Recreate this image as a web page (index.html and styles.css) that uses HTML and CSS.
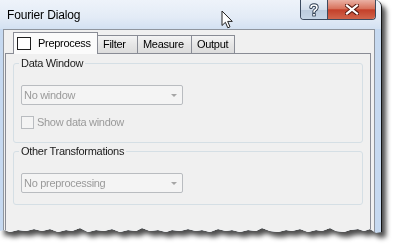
FILE: index.html
```html
<!DOCTYPE html>
<html lang="en">
<head>
    <meta charset="UTF-8">
    <title>Fourier Dialog</title>
    <link rel="stylesheet" href="styles.css">
</head>
<body>

<div class="page">
  <div class="shot">
    <div class="window">

      <!-- Title bar -->
      <div class="titlebar">
        <span class="title">Fourier Dialog</span>
        <div class="caption-btns">
          <div class="cap-help">
            <svg width="12" height="14" viewBox="0 0 12 14">
              <path d="M3 4.5 Q3 2 6 2 Q9 2 9 4.5 Q9 6 7.2 7 Q6 7.6 6 9" fill="none" stroke="#2b3a4e" stroke-width="3.4" stroke-linecap="round"/>
              <path d="M3 4.5 Q3 2 6 2 Q9 2 9 4.5 Q9 6 7.2 7 Q6 7.6 6 9" fill="none" stroke="#fff" stroke-width="1.6" stroke-linecap="round"/>
              <rect x="4.3" y="10.2" width="3.4" height="3.2" fill="#2b3a4e"/>
              <rect x="5.1" y="11" width="1.8" height="1.6" fill="#fff"/>
            </svg>
          </div>
          <div class="cap-close">
            <svg width="14" height="11" viewBox="0 0 14 11">
              <path d="M2 1.5 L12 9.5 M12 1.5 L2 9.5" stroke="#5a1a10" stroke-width="4.2" stroke-linecap="square"/>
              <path d="M2 1.5 L12 9.5 M12 1.5 L2 9.5" stroke="#fff" stroke-width="2.2" stroke-linecap="square"/>
            </svg>
          </div>
        </div>
      </div>

      <!-- Client area -->
      <div class="frame">
        <div class="client">
          <div class="tabs">
            <div class="tab selected">
              <span class="tab-check"></span>
              <span>Preprocess</span>
            </div>
            <div class="tab tab-filter">Filter</div>
            <div class="tab tab-measure">Measure</div>
            <div class="tab tab-output">Output</div>
          </div>

          <div class="panel">
            <div class="group group-window">
              <span class="group-title">Data Window</span>
              <div class="combo">
                <span>No window</span>
                <span class="combo-arrow"></span>
              </div>
              <label class="check-row">
                <span class="check"></span>
                <span>Show data window</span>
              </label>
            </div>

            <div class="group group-other">
              <span class="group-title">Other Transformations</span>
              <div class="combo">
                <span>No preprocessing</span>
                <span class="combo-arrow"></span>
              </div>
            </div>
          </div>
        </div>
      </div>

    </div>
  </div>
</div>

<!-- Mouse pointer -->
<svg class="cursor" width="14" height="20" viewBox="0 0 14 20">
  <path d="M1 1 L1 15.5 L4.4 12.3 L6.8 17.8 L9 16.8 L6.7 11.4 L11.3 11.4 Z" fill="#fff" stroke="#222" stroke-width="1" stroke-linejoin="round"/>
</svg>

</body>
</html>
```

FILE: styles.css
```css
html, body {
  margin: 0;
  padding: 0;
  background: #ffffff;
  width: 398px;
  height: 252px;
  overflow: hidden;
  font-family: "Liberation Sans", Arial, sans-serif;
  font-size: 11px;
  letter-spacing: -0.3px;
  color: #1b1b1b;
}

/* shadow under the torn screenshot */
.page {
  width: 382px;
  filter: drop-shadow(4px 5px 2.5px rgba(0, 0, 0, 0.7));
}

.shot {
  width: 382px;
  height: 240px;
  clip-path: polygon(0 0, 382px 0, 382px 232px, 376px 233px, 370px 229px, 364px 231px, 358px 229px,
    350px 230px, 344px 232px, 336px 231px, 330px 228px, 322px 231px, 316px 230px, 308px 232px,
    300px 229px, 292px 231px, 286px 230px, 278px 232px, 270px 231px, 262px 228px, 256px 231px,
    248px 230px, 240px 232px, 232px 230px, 226px 231px, 218px 229px, 210px 232px, 202px 230px,
    196px 231px, 188px 229px, 180px 231px, 172px 230px, 166px 232px, 158px 230px, 150px 231px,
    142px 228px, 136px 231px, 128px 230px, 120px 232px, 112px 229px, 104px 231px, 96px 230px,
    88px 232px, 80px 228px, 72px 231px, 66px 230px, 58px 232px, 50px 229px, 42px 231px,
    34px 229px, 26px 231px, 18px 230px, 10px 232px, 4px 230px, 0 231px);
}

.window {
  width: 381px;
  height: 240px;
  border-right: 1px solid #111;
  border-top-right-radius: 7px;
  background: #c6d9f0;
  display: flex;
  flex-direction: column;
}

/* Title bar */
.titlebar {
  height: 29px;
  flex: none;
  display: flex;
  align-items: flex-start;
  background: linear-gradient(to bottom, #eef3fa, #e3ebf6 60%, #d3e1f2);
  border-top-right-radius: 7px;
}

.title {
  margin: 8px 0 0 7px;
  font-size: 12px;
  line-height: 15px;
  letter-spacing: -0.15px;
  color: #000;
}

.caption-btns {
  margin-left: auto;
  margin-right: 5px;
  display: flex;
  height: 19px;
  border: 1px solid #3d4b5f;
  border-top: none;
  border-radius: 0 0 4px 4px;
  overflow: hidden;
}

.cap-help {
  width: 26px;
  display: flex;
  justify-content: center;
  align-items: center;
  border-right: 1px solid #3d4b5f;
  background: linear-gradient(to bottom, #e9eff6, #d3deeb 50%, #bccbdd 52%, #c6d5e6);
}

.cap-close {
  width: 47px;
  display: flex;
  justify-content: center;
  align-items: center;
  background: linear-gradient(to bottom, #eab1a4, #d8735d 45%, #c4402a 52%, #d1654c);
}

/* Frame + client */
.frame {
  flex: 1;
  padding: 0 6px 0 3px;
  display: flex;
}

.client {
  flex: 1;
  background: #f0f0f0;
  border: 1px solid #8f959e;
  border-bottom: none;
  padding-top: 2px;
  display: flex;
  flex-direction: column;
}

/* Tabs */
.tabs {
  height: 21px;
  display: flex;
  align-items: flex-end;
  padding-left: 9px;
  position: relative;
  z-index: 2;
}

.tab {
  height: 17px;
  line-height: 17px;
  border: 1px solid #898c95;
  border-bottom: none;
  background: linear-gradient(to bottom, #f4f4f4, #e6e6e6 50%, #dcdcdc);
  padding-left: 5px;
  margin-left: -1px;
  color: #000;
}

.tab.selected {
  height: 21px;
  width: 80px;
  margin-left: 0;
  margin-bottom: -1px;
  background: #fbfbfb;
  display: flex;
  align-items: center;
  gap: 7px;
  padding-left: 3px;
  position: relative;
  z-index: 1;
}

.tab-check {
  width: 12px;
  height: 11px;
  border: 1px solid #1e1e1e;
  background: #fff;
}

.tab-filter { width: 34px; }
.tab-measure { width: 48px; }
.tab-output { width: 37px; }

/* Tab page */
.panel {
  flex: 1;
  margin: 0 3px 0 1px;
  border: 1px solid #898c95;
  border-bottom: none;
  background: #f0f0f0;
  padding: 9px 7px 0;
}

.group {
  border: 1px solid #d5dfe5;
  border-radius: 3px;
  padding: 0 7px;
  display: flex;
  flex-direction: column;
  align-items: flex-start;
}

.group-window { padding-bottom: 13px; }
.group-other { margin-top: 8px; padding-bottom: 11px; }

.group-title {
  margin: -7px 0 0 -2px;
  padding: 0 2px;
  line-height: 13px;
  background: #f0f0f0;
  color: #1b1b1b;
}

.combo {
  margin-top: 15px;
  width: 158px;
  height: 18px;
  border: 1px solid #b9bcc0;
  border-radius: 2px;
  background: #f4f4f4;
  color: #9a9a9a;
  display: flex;
  align-items: center;
  padding-left: 2px;
}

.combo-arrow {
  margin-left: auto;
  margin-right: 5px;
  width: 0;
  height: 0;
  border-left: 3px solid transparent;
  border-right: 3px solid transparent;
  border-top: 3px solid #a6a6a6;
}

.check-row {
  margin-top: 11px;
  display: flex;
  align-items: center;
  gap: 3px;
  color: #9a9a9a;
  line-height: 13px;
}

.check {
  width: 11px;
  height: 11px;
  border: 1px solid #b9bcc0;
  background: #f4f4f4;
}

/* pointer over the caption */
.cursor {
  position: absolute;
  left: 221px;
  top: 10px;
}
```
